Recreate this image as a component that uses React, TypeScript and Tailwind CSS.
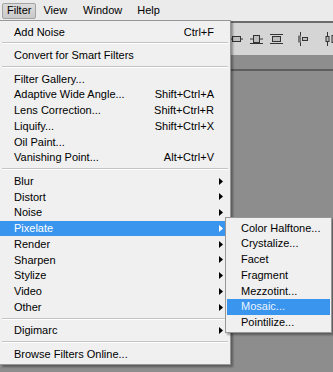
import { ReactNode } from "react";

type Row =
  | { kind: "sep" }
  | { kind: "item"; label: string; shortcut?: string; sub?: boolean; active?: boolean };

const filterMenu: Row[] = [
  { kind: "item", label: "Add Noise", shortcut: "Ctrl+F" },
  { kind: "sep" },
  { kind: "item", label: "Convert for Smart Filters" },
  { kind: "sep" },
  { kind: "item", label: "Filter Gallery..." },
  { kind: "item", label: "Adaptive Wide Angle...", shortcut: "Shift+Ctrl+A" },
  { kind: "item", label: "Lens Correction...", shortcut: "Shift+Ctrl+R" },
  { kind: "item", label: "Liquify...", shortcut: "Shift+Ctrl+X" },
  { kind: "item", label: "Oil Paint..." },
  { kind: "item", label: "Vanishing Point...", shortcut: "Alt+Ctrl+V" },
  { kind: "sep" },
  { kind: "item", label: "Blur", sub: true },
  { kind: "item", label: "Distort", sub: true },
  { kind: "item", label: "Noise", sub: true },
  { kind: "item", label: "Pixelate", sub: true, active: true },
  { kind: "item", label: "Render", sub: true },
  { kind: "item", label: "Sharpen", sub: true },
  { kind: "item", label: "Stylize", sub: true },
  { kind: "item", label: "Video", sub: true },
  { kind: "item", label: "Other", sub: true },
  { kind: "sep" },
  { kind: "item", label: "Digimarc", sub: true },
  { kind: "sep" },
  { kind: "item", label: "Browse Filters Online..." },
];

const pixelateMenu = [
  "Color Halftone...",
  "Crystalize...",
  "Facet",
  "Fragment",
  "Mezzotint...",
  "Mosaic...",
  "Pointilize...",
];

function Arrow({ white }: { white?: boolean }) {
  return (
    <svg width="4" height="7" viewBox="0 0 4 7" className="shrink-0">
      <polygon points="0,0 4,3.5 0,7" fill={white ? "#ffffff" : "#000000"} />
    </svg>
  );
}

function ToolIcon({ children }: { children: ReactNode }) {
  return (
    <svg width="13" height="14" viewBox="0 0 13 14" className="shrink-0">
      {children}
    </svg>
  );
}

export default function App() {
  return (
    <div className="relative w-[333px] h-[372px] overflow-hidden bg-[#8d8d8d] font-['Liberation_Sans',Arial,sans-serif] text-[11px] text-black select-none">
      {/* Menu bar */}
      <div className="h-[21px] bg-[#ebebeb] flex items-center pl-[2px]">
        <div className="h-[16px] px-[4px] flex items-center rounded-[2px] border border-[#a3a3a3] bg-gradient-to-b from-[#dcdcdc] to-[#c9c9c9]">
          Filter
        </div>
        <div className="ml-[7px] px-[0px]">View</div>
        <div className="ml-[16px]">Window</div>
        <div className="ml-[15px]">Help</div>
      </div>

      {/* Options bar */}
      <div className="h-[34px] border-t-2 border-[#6b6b6b] bg-[#d5d5d5] flex items-center pl-[230px] gap-[7px]">
        <ToolIcon>
          <line x1="0" y1="7" x2="13" y2="7" stroke="#333" />
          <rect x="2.5" y="4.5" width="8" height="5" fill="#bdbdbd" stroke="#333" />
        </ToolIcon>
        <ToolIcon>
          <line x1="0" y1="7" x2="13" y2="7" stroke="#333" />
          <rect x="3.5" y="3.5" width="6" height="7" fill="#bdbdbd" stroke="#333" />
          <line x1="0" y1="11.5" x2="13" y2="11.5" stroke="#333" />
        </ToolIcon>
        <ToolIcon>
          <rect x="2.5" y="4.5" width="8" height="5" fill="#bdbdbd" stroke="#333" />
          <line x1="0" y1="11.5" x2="13" y2="11.5" stroke="#333" />
          <line x1="0" y1="2.5" x2="13" y2="2.5" stroke="#333" />
        </ToolIcon>
        <div className="w-[14px]" />
        <ToolIcon>
          <line x1="3.5" y1="0" x2="3.5" y2="14" stroke="#333" />
          <rect x="1" y="3.5" width="3" height="7" fill="#777" />
          <rect x="5.5" y="5.5" width="5" height="3" fill="#bdbdbd" stroke="#333" />
        </ToolIcon>
        <div className="w-[6px]" />
        <ToolIcon>
          <line x1="3.5" y1="0" x2="3.5" y2="14" stroke="#333" />
          <line x1="9.5" y1="0" x2="9.5" y2="14" stroke="#333" />
          <rect x="2" y="4.5" width="3" height="5" fill="#bdbdbd" stroke="#333" />
          <rect x="8" y="3.5" width="3" height="7" fill="#bdbdbd" stroke="#333" />
        </ToolIcon>
      </div>

      {/* Document area */}
      <div className="h-[16px] bg-[#8e8e8e] border-b-2 border-[#5e5e5e]" />

      {/* Filter dropdown */}
      <div className="absolute left-0 top-[20px] w-[231px] pt-[3px] pb-[2px] bg-[#f0f0f0] border border-l-0 border-[#979797] shadow-[2px_2px_2px_rgba(0,0,0,0.35)]">
        {filterMenu.map((row, i) =>
          row.kind === "sep" ? (
            <div key={i} className="h-[7.75px] pt-[2.5px] px-[2px]">
              <div className="border-t border-[#c4c4c4] border-b border-b-white" />
            </div>
          ) : (
            <div
              key={i}
              className={
                row.active
                  ? "h-[15.75px] flex items-center pl-[14px] pr-[7px] bg-[#3a95ef] text-white"
                  : "h-[15.75px] flex items-center pl-[14px] pr-[7px]"
              }
            >
              <span className="flex-1 whitespace-nowrap">{row.label}</span>
              {row.shortcut && (
                <span className="whitespace-nowrap mr-[9px]">{row.shortcut}</span>
              )}
              {row.sub && <Arrow white={row.active} />}
            </div>
          )
        )}
      </div>

      {/* Pixelate submenu */}
      <div className="absolute left-[225px] top-[217px] w-[107px] pt-[2px] pb-[2px] px-[1px] bg-[#f0f0f0] border border-[#979797] shadow-[2px_2px_2px_rgba(0,0,0,0.35)]">
        {pixelateMenu.map((label) => (
          <div
            key={label}
            className={
              label === "Mosaic..."
                ? "h-[15.75px] flex items-center pl-[14px] bg-[#3a95ef] text-[#eaf3ff]"
                : "h-[15.75px] flex items-center pl-[14px]"
            }
          >
            {label}
          </div>
        ))}
      </div>
    </div>
  );
}
